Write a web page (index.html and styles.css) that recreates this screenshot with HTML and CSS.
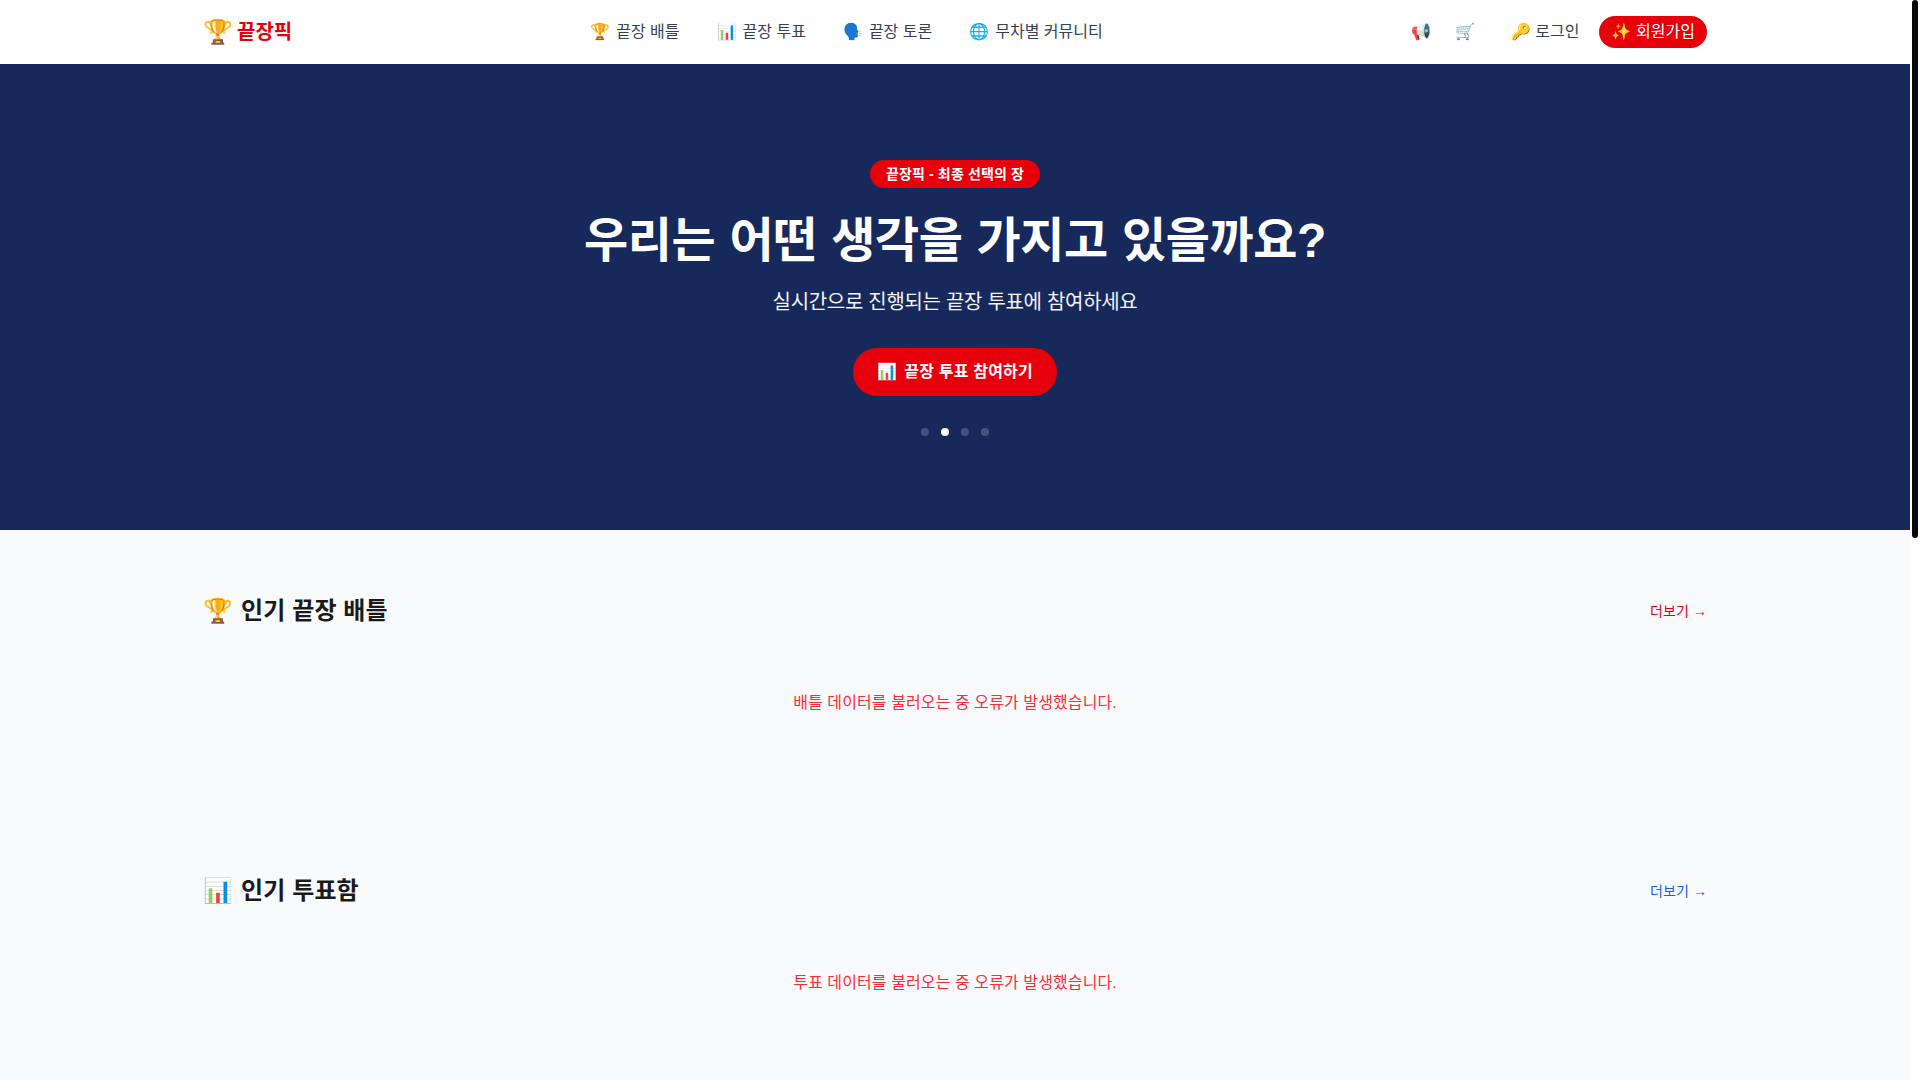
FILE: index.html
```html
<!DOCTYPE html>
<html lang="ko">
<head>
  <meta charset="UTF-8" />
  <meta name="viewport" content="width=device-width, initial-scale=1.0"/>
  <title>끝장픽</title>
  <link rel="stylesheet" href="styles.css">
</head>
<body>
  <div class="page">
    <!-- 상단 메뉴 -->
    <header class="site-header">
      <div class="container header-inner">
        <a class="logo" href="#"><span class="logo-icon">🏆</span><span class="logo-text">끝장픽</span></a>
        <nav class="main-nav">
          <a href="#"><span>🏆</span>끝장 배틀</a>
          <a href="#"><span>📊</span>끝장 투표</a>
          <a href="#"><span>🗣️</span>끝장 토론</a>
          <a href="#"><span>🌐</span>무차별 커뮤니티</a>
        </nav>
        <div class="header-actions">
          <a class="icon-link" href="#">📢</a>
          <a class="icon-link" href="#">🛒</a>
          <a class="login-link" href="#">🔑 로그인</a>
          <a class="signup-btn" href="#">✨ 회원가입</a>
        </div>
      </div>
    </header>

    <!-- 히어로 -->
    <section class="hero">
      <span class="hero-badge">끝장픽 - 최종 선택의 장</span>
      <h1>우리는 어떤 생각을 가지고 있을까요?</h1>
      <p class="hero-sub">실시간으로 진행되는 끝장 투표에 참여하세요</p>
      <a class="hero-btn" href="#"><span>📊</span>끝장 투표 참여하기</a>
      <div class="hero-dots">
        <span class="dot"></span>
        <span class="dot active"></span>
        <span class="dot"></span>
        <span class="dot"></span>
      </div>
    </section>

    <main class="content">
      <section class="container block">
        <div class="block-head">
          <h2><span>🏆</span>인기 끝장 배틀</h2>
          <a class="more more-red" href="#">더보기 →</a>
        </div>
        <p class="load-error">배틀 데이터를 불러오는 중 오류가 발생했습니다.</p>
      </section>
      <section class="container block">
        <div class="block-head">
          <h2><span>📊</span>인기 투표함</h2>
          <a class="more more-blue" href="#">더보기 →</a>
        </div>
        <p class="load-error">투표 데이터를 불러오는 중 오류가 발생했습니다.</p>
      </section>
    </main>
  </div>
  <div class="scrollbar"><div class="scrollbar-thumb"></div></div>
</body>
</html>
```

FILE: styles.css
```css
* { box-sizing: border-box; }
body {
  margin: 0;
  height: 100vh;
  display: flex;
  overflow: hidden;
  font-family: "Liberation Sans", "Noto Sans CJK KR", sans-serif;
  color: #1a1a1a;
  background: #fff;
}
a { text-decoration: none; color: inherit; }

.page { flex: 1; min-width: 0; height: 100%; overflow: hidden; background: #f9fafb; }

/* 스크롤바 */
.scrollbar { width: 10px; padding: 0 2px; background: #fff; }
.scrollbar-thumb { height: 538px; background: #0a0a0a; border-radius: 3px; }

.container {
  width: 100%;
  max-width: 1536px;
  margin: 0 auto;
  padding: 0 16px;
}

/* 헤더 */
.site-header { background: #fff; }
.header-inner {
  height: 64px;
  display: flex;
  align-items: center;
  justify-content: space-between;
}
.logo { display: flex; align-items: center; gap: 4px; font-size: 20px; font-weight: 700; color: #e7000b; }
.logo-icon { font-size: 24px; }
.logo-text { padding-bottom: 4px; }
.main-nav { display: flex; gap: 37px; margin-right: 10px; font-size: 16px; line-height: 24px; color: #364153; }
.main-nav a { display: flex; align-items: center; gap: 6px; }
.header-actions { display: flex; align-items: center; font-size: 16px; line-height: 24px; color: #364153; }
.icon-link { margin-right: 24px; }
.login-link { margin-left: 12px; margin-right: 20px; }
.signup-btn {
  background: #e7000b;
  color: #fff;
  letter-spacing: .05px;
  padding: 4px 12px;
  border-radius: 9999px;
}

/* 히어로 */
.hero {
  height: 466px;
  padding-top: 96px;
  background: #16295a;
  color: #fff;
  display: flex;
  flex-direction: column;
  align-items: center;
}
.hero-badge {
  background: #e7000b;
  font-size: 14px;
  font-weight: 700;
  line-height: 20px;
  letter-spacing: .15px;
  padding: 4px 16px;
  border-radius: 9999px;
}
.hero h1 {
  margin: 21px 0 15px;
  font-size: 48px;
  line-height: 64px;
  font-weight: 700;
  letter-spacing: -.4px;
  word-spacing: 1.2px;
}
.hero-sub { margin: 0 0 32px; font-size: 20px; line-height: 28px; letter-spacing: -.3px; color: #f3f4f6; }
.hero-btn {
  display: flex;
  align-items: center;
  gap: 7px;
  background: #e7000b;
  font-size: 16px;
  font-weight: 700;
  line-height: 24px;
  letter-spacing: .2px;
  padding: 12px 24px;
  border-radius: 9999px;
}
.hero-dots { display: flex; gap: 12px; margin-top: 32px; }
.dot { width: 8px; height: 8px; border-radius: 50%; background: rgba(255,255,255,.2); }
.dot.active { background: #fff; }

/* 본문 */
.block { height: 280px; padding-top: 65px; }
.block-head {
  display: flex;
  align-items: center;
  justify-content: space-between;
  margin-bottom: 32px;
}
.block-head h2 {
  display: flex;
  align-items: center;
  gap: 8px;
  margin: 0;
  font-size: 24px;
  line-height: 32px;
  font-weight: 700;
  letter-spacing: .1px;
}
.more { margin-top: -2px; font-size: 14px; letter-spacing: .1px; }
.more-red { color: #e7000b; }
.more-blue { color: #155dfc; }
.load-error { margin: 0; padding: 32px 0; text-align: center; font-size: 16px; line-height: 24px; letter-spacing: .1px; color: #fb2c36; }
```
